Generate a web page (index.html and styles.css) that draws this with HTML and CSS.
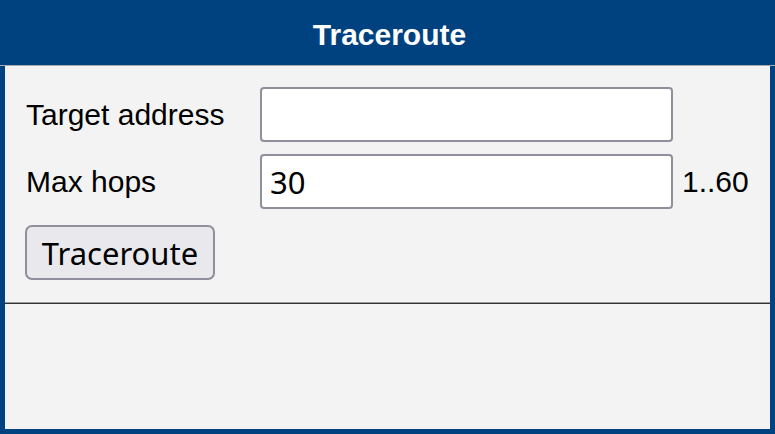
FILE: index.html
```html
<!DOCTYPE html>
<html lang="en">
<head>
    <meta charset="UTF-8">
    <meta name="viewport" content="width=device-width, initial-scale=1.0">
    <title>Traceroute</title>
    <link rel="stylesheet" href="styles.css">
</head>
<body>
    <div class="window">
        <h1 class="title-bar">Traceroute</h1>

        <div class="content">
            <form class="trace-form">
                <label for="target">Target address</label>
                <input type="text" id="target" class="field">
                <span></span>

                <label for="hops">Max hops</label>
                <input type="text" id="hops" class="field" value="30">
                <span class="hint">1..60</span>

                <button type="button" id="traceBtn">Traceroute</button>
            </form>

            <hr class="divider">

            <div id="traceOutput"></div>
        </div>
    </div>
</body>
</html>
```

FILE: styles.css
```css
html, body {
    margin: 0;
    padding: 0;
}

body {
    font-family: "Liberation Sans", Arial, sans-serif;
    font-size: 30px;
    color: #000;
    background-color: #004280;
}

.window {
    height: 434px;
    box-sizing: border-box;
    display: flex;
    flex-direction: column;
    border: 5px solid #004280;
    border-top: none;
}

.title-bar {
    margin: 0 -5px;
    padding: 18px 0 14px 4px;
    font-size: 30px;
    line-height: 33px;
    font-weight: bold;
    text-align: center;
    color: #fff;
    background-color: #004280;
    border-bottom: 1px solid #a3aab4;
}

.content {
    flex: 1;
    background-color: #f3f3f3;
}

.trace-form {
    display: grid;
    grid-template-columns: 234px 413px auto;
    row-gap: 12px;
    align-items: center;
    padding: 21px 0 0 21px;
}

.field {
    box-sizing: border-box;
    height: 55px;
    width: 100%;
    margin: 0;
    padding: 0 8px;
    font-family: "Noto Sans", "Open Sans", sans-serif;
    font-size: 31px;
    color: #000;
    background-color: #fff;
    border: 2px solid #8f8f9d;
    border-radius: 4px;
}

.hint {
    margin-left: 9px;
}

#traceBtn {
    grid-column: 1 / 3;
    justify-self: start;
    box-sizing: border-box;
    width: 190px;
    height: 55px;
    margin: 4px 0 0 -1px;
    padding: 0;
    font-family: "Noto Sans", "Open Sans", sans-serif;
    font-size: 31px;
    color: #000;
    background-color: #e9e9ed;
    border: 2px solid #8f8f9d;
    border-radius: 7px;
}

.divider {
    margin: 22px 0 0;
    border: none;
    border-top: 1px solid #9a9a9a;
    border-bottom: 1px solid #333;
}
```
